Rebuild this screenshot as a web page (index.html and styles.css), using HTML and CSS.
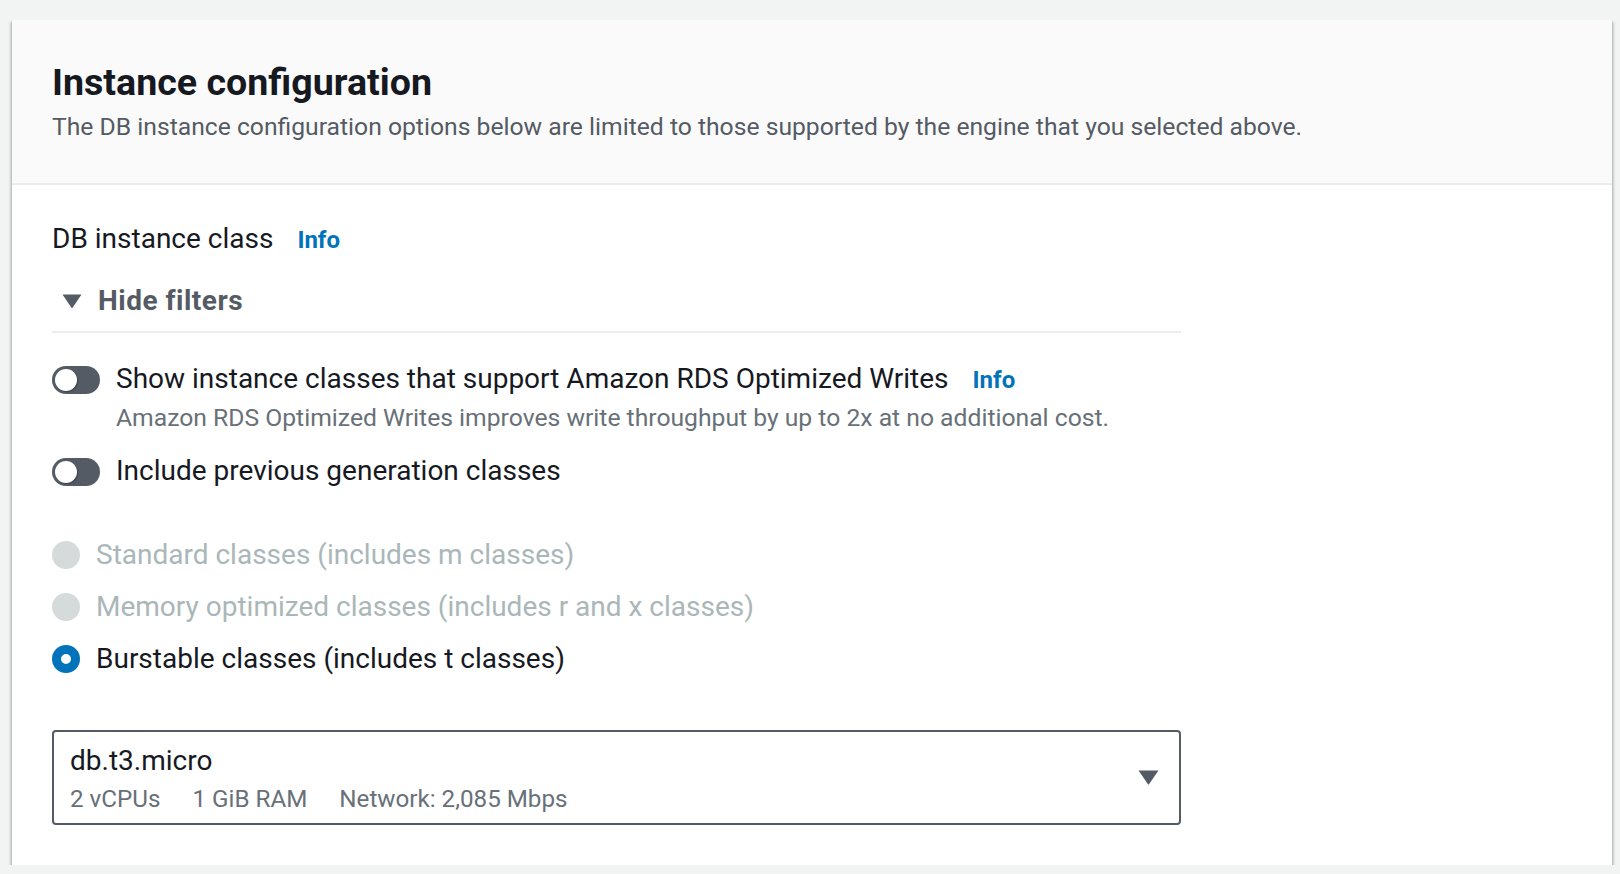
FILE: index.html
```html
<!DOCTYPE html>
<html lang="en">
<head>
<meta charset="utf-8">
<title>Instance configuration</title>
<link rel="stylesheet" href="styles.css">
</head>
<body>
<section class="container">
  <header class="container-header">
    <h2 class="title">Instance configuration</h2>
    <p class="header-desc">The DB instance configuration options below are limited to those supported by the engine that you selected above.</p>
  </header>
  <div class="container-content">
    <div class="field-label">
      <span>DB instance class</span>
      <a class="info info-label">Info</a>
    </div>
    <div class="filters">
      <div class="expander">
        <svg class="expander-caret" viewBox="0 0 20 15" width="20" height="15" aria-hidden="true">
          <path d="M0.5 0.5 H19.5 L10 14.5 Z" fill="#545b64"/>
        </svg>
        <span>Hide filters</span>
      </div>

      <div class="toggle-row first">
        <span class="toggle"><span class="knob"></span></span>
        <div class="toggle-text">
          <div class="toggle-label">Show instance classes that support Amazon RDS Optimized Writes<a class="info info-toggle">Info</a></div>
          <div class="toggle-desc">Amazon RDS Optimized Writes improves write throughput by up to 2x at no additional cost.</div>
        </div>
      </div>

      <div class="toggle-row second">
        <span class="toggle"><span class="knob"></span></span>
        <div class="toggle-text">
          <div class="toggle-label">Include previous generation classes</div>
        </div>
      </div>

      <div class="radio-group">
        <div class="radio-row disabled">
          <span class="radio"></span>
          <span class="radio-label">Standard classes (includes m classes)</span>
        </div>
        <div class="radio-row disabled">
          <span class="radio"></span>
          <span class="radio-label">Memory optimized classes (includes r and x classes)</span>
        </div>
        <div class="radio-row checked">
          <span class="radio"></span>
          <span class="radio-label">Burstable classes (includes t classes)</span>
        </div>
      </div>

      <div class="select">
        <div class="select-main">
          <div class="select-value">db.t3.micro</div>
          <div class="select-tags">
            <span>2 vCPUs</span>
            <span>1 GiB RAM</span>
            <span>Network: 2,085 Mbps</span>
          </div>
        </div>
        <svg class="select-caret" viewBox="0 0 21 15" width="21" height="15" aria-hidden="true">
          <path d="M0.5 0.5 H20.5 L11.2 14 Q10.5 15 9.8 14 Z" fill="#545b64"/>
        </svg>
      </div>
    </div>
  </div>
</section>
</body>
</html>
```

FILE: styles.css
```css
* {
  box-sizing: border-box;
}

html, body {
  margin: 0;
  background: #f2f3f3;
}

body {
  padding: 20px 8px 0 12px;
  font-family: Roboto, "Liberation Sans", Arial, sans-serif;
  color: #16191f;
}

.container {
  background: #ffffff;
  box-shadow: 0 2px 2px 0 rgba(0, 28, 36, 0.3),
              2px 2px 2px 0 rgba(0, 28, 36, 0.15),
              -2px 2px 2px 0 rgba(0, 28, 36, 0.15);
}

.container-header {
  background: #fafafa;
  border-bottom: 2px solid #eaeded;
  padding: 40px 40px 40px 40px;
}

.title {
  margin: 0;
  font-size: 37.6px;
  line-height: 44px;
  font-weight: 700;
  color: #16191f;
}

.header-desc {
  margin: 7px 0 0 0;
  font-size: 24.7px;
  line-height: 32px;
  color: #545b64;
}

.container-content {
  padding: 34px 40px 40px 40px;
}

.field-label {
  display: flex;
  align-items: baseline;
  font-size: 28px;
  line-height: 40px;
  color: #16191f;
}

.info {
  color: #0073bb;
  font-weight: 700;
  font-size: 24px;
  text-decoration: none;
}

.info-label {
  margin-left: 24px;
}

.info-toggle {
  margin-left: 24px;
}

.filters {
  width: 1129px;
}

.expander {
  margin-top: 21px;
  padding-bottom: 10px;
  border-bottom: 2px solid #eaeded;
  display: flex;
  align-items: center;
  font-size: 28px;
  line-height: 40px;
  font-weight: 700;
  letter-spacing: 0.5px;
  color: #545b64;
}

.expander-caret {
  margin-left: 10px;
  margin-right: 16px;
  flex: none;
}

.toggle-row {
  display: flex;
  align-items: flex-start;
  gap: 16px;
}

.toggle-row.first {
  margin-top: 26px;
}

.toggle-row.second {
  margin-top: 17px;
}

.toggle {
  flex: none;
  position: relative;
  width: 48px;
  height: 28px;
  margin-top: 7px;
  border-radius: 14px;
  background: #545b64;
}

.knob {
  position: absolute;
  left: 3px;
  top: 3px;
  width: 22px;
  height: 22px;
  border-radius: 50%;
  background: #ffffff;
  box-shadow: 1px 1px 1px rgba(0, 0, 0, 0.25);
}

.toggle-label {
  font-size: 28px;
  line-height: 40px;
  color: #16191f;
}

.toggle-desc {
  margin-top: 2px;
  font-size: 24.7px;
  line-height: 32px;
  color: #687078;
}

.radio-group {
  margin-top: 44px;
  display: flex;
  flex-direction: column;
  gap: 12px;
}

.radio-row {
  display: flex;
  align-items: center;
  gap: 16px;
  font-size: 28px;
  line-height: 40px;
}

.radio {
  flex: none;
  width: 28px;
  height: 28px;
  border-radius: 50%;
}

.radio-row.disabled .radio {
  background: #d5dbdb;
}

.radio-row.disabled .radio-label {
  color: #aab7b8;
}

.radio-row.checked .radio {
  background: #ffffff;
  border: 9px solid #0073bb;
}

.radio-row.checked .radio-label {
  color: #16191f;
}

.select {
  margin-top: 51px;
  height: 95px;
  border: 2px solid #545b64;
  border-radius: 4px;
  display: flex;
  align-items: center;
  padding: 0 20px 0 16px;
}

.select-main {
  flex: 1;
}

.select-value {
  font-size: 28px;
  line-height: 40px;
  color: #16191f;
}

.select-tags {
  margin-top: 2px;
  display: flex;
  gap: 32px;
  font-size: 24.2px;
  line-height: 32px;
  color: #687078;
}

.select-caret {
  flex: none;
}
```
